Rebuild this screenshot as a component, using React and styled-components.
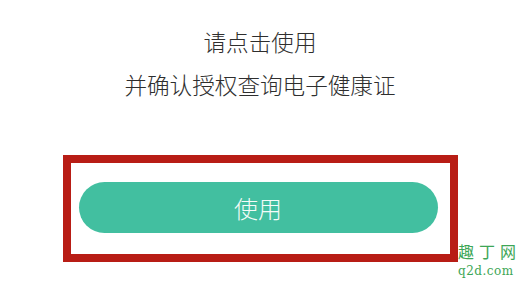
import React from 'react'
import styled, { createGlobalStyle } from 'styled-components'

const GlobalStyle = createGlobalStyle`
  html, body {
    margin: 0;
    padding: 0;
    background: #ffffff;
  }
  body {
    font-family: 'Noto Sans CJK SC', 'Noto Sans', sans-serif;
  }
`

const Page = styled.div`
  position: relative;
  width: 520px;
  height: 283px;
  overflow: hidden;
  display: flex;
  flex-direction: column;
  align-items: center;
  padding-top: 27px;
  box-sizing: border-box;
`

const Line = styled.div`
  font-size: 22.6px;
  font-weight: 300;
  line-height: 30px;
  color: #2e2e2e;
  margin-top: ${(p) => (p.second ? '13px' : '0')};
  white-space: nowrap;
`

const Highlight = styled.div`
  margin-top: 55px;
  width: 395px;
  height: 107px;
  box-sizing: border-box;
  border: 8px solid #b81d15;
  padding: 19px 12px 21px 8px;
  display: flex;
`

const UseButton = styled.button`
  flex: 1;
  height: 51px;
  border: none;
  border-radius: 26px;
  background: #42bfa0;
  color: #f4fbf8;
  font-family: 'Noto Sans CJK SC', sans-serif;
  font-size: 24px;
  font-weight: 300;
  padding: 0;
  cursor: pointer;
  display: flex;
  align-items: center;
  justify-content: center;
`

const Watermark = styled.div`
  position: absolute;
  left: 458px;
  top: 243px;
  width: 62px;
  display: flex;
  flex-direction: column;
  align-items: flex-start;
  color: #3da656;
  font-family: 'Noto Sans CJK SC', serif;
  line-height: 1;
  white-space: nowrap;
`

const MarkName = styled.span`
  font-size: 16px;
  letter-spacing: 5px;
`

const MarkSite = styled.span`
  font-family: 'DejaVu Serif', serif;
  font-size: 12px;
  margin-top: 6px;
  letter-spacing: 0.5px;
`

export default function App() {
  return (
    <>
      <GlobalStyle />
      <Page>
        <Line>请点击使用</Line>
        <Line second>并确认授权查询电子健康证</Line>
        <Highlight>
          <UseButton type="button">使用</UseButton>
        </Highlight>
        <Watermark>
          <MarkName>趣丁网</MarkName>
          <MarkSite>q2d.com</MarkSite>
        </Watermark>
      </Page>
    </>
  )
}
